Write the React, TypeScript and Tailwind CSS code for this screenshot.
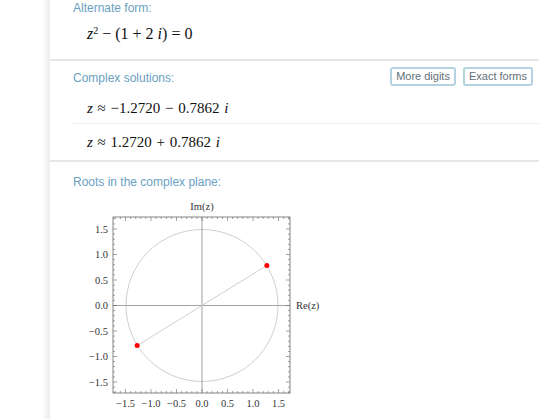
const serif = { fontFamily: '"Liberation Serif", "DejaVu Serif", serif' };

function Plot() {
  const cx = 202;
  const cy = 304.5;
  const u = 51;
  const ticks: number[] = [];
  for (let i = -17; i <= 17; i++) ticks.push(i / 10);
  const labels = [1.5, 1.0, 0.5, 0.0, -0.5, -1.0, -1.5];
  const fmt = (v: number) => (v < 0 ? "\u2212" : "") + Math.abs(v).toFixed(1);
  const left = 113;
  const right = 290;
  const top = 216;
  const bottom = 392;
  return (
    <svg width="240" height="224" viewBox="80 195 240 224" className="block">
      <g fontFamily='"Liberation Serif", "DejaVu Serif", serif' fontSize="10.5" fill="#333">
        <text x={cx} y={209} textAnchor="middle">Im(z)</text>
        <text x={296} y={308}>Re(z)</text>
        {labels.map((v) => (
          <text key={"y" + v} x={108} y={cy - v * u + 3.5} textAnchor="end">
            {fmt(v)}
          </text>
        ))}
        {labels.map((v) => (
          <text key={"x" + v} x={cx + v * u} y={406} textAnchor="middle">
            {fmt(v)}
          </text>
        ))}
      </g>
      <circle cx={cx} cy={cy} r={76} fill="none" stroke="#cfcfcf" strokeWidth="1" />
      <line x1={cx} y1={top} x2={cx} y2={bottom} stroke="#8a8a8a" strokeWidth="0.8" />
      <line x1={left} y1={cy} x2={right} y2={cy} stroke="#8a8a8a" strokeWidth="0.8" />
      <line x1={cx - 1.272 * u} y1={cy + 0.7862 * u} x2={cx + 1.272 * u} y2={cy - 0.7862 * u} stroke="#cfcfcf" strokeWidth="1" />
      <rect x={left} y={top} width={right - left} height={bottom - top} fill="none" stroke="#666" strokeWidth="0.8" />
      {ticks.map((v) => {
        const major = Math.abs(Math.round(v * 10) % 5) === 0;
        const len = major ? 4 : 2;
        const x = cx + v * u;
        const y = cy - v * u;
        return (
          <g key={v} stroke="#666" strokeWidth="0.6">
            <line x1={x} y1={top} x2={x} y2={top + len} />
            <line x1={x} y1={bottom} x2={x} y2={bottom - len} />
            <line x1={left} y1={y} x2={left + len} y2={y} />
            <line x1={right} y1={y} x2={right - len} y2={y} />
          </g>
        );
      })}
      <circle cx={cx + 1.272 * u} cy={cy - 0.7862 * u} r={2.5} fill="#ff0000" />
      <circle cx={cx - 1.272 * u} cy={cy + 0.7862 * u} r={2.5} fill="#ff0000" />
    </svg>
  );
}

function Title({ children }: { children: React.ReactNode }) {
  return <div className="text-[12px] leading-[14px] text-[#6aa0bf]">{children}</div>;
}

function Button({ children }: { children: React.ReactNode }) {
  return (
    <div className="flex h-[19px] items-center rounded-[3px] border-2 border-[#b4d3de] px-[4px] text-[11px] text-[#5f6f78]">
      {children}
    </div>
  );
}

export default function App() {
  return (
    <div
      className="flex h-[419px] w-[539px] overflow-hidden bg-white"
      style={{ fontFamily: '"Liberation Sans", Arial, sans-serif' }}
    >
      <div className="w-[50px] shrink-0 bg-gradient-to-r from-white from-[85%] to-[#ececec]" />
      <div className="flex-1 bg-white">
        <div className="h-[61px] border-b-2 border-[#e6e6e6] pl-[23px] pt-[1px]">
          <Title>Alternate form:</Title>
          <div className="mt-[10px] pl-[14px] text-[16px] leading-[18px] text-[#111]" style={serif}>
            <i>z</i>
            <sup className="text-[10px]">2</sup> − (1 + 2 <i>i</i>) = 0
          </div>
        </div>
        <div className="h-[101px] border-b-2 border-[#e6e6e6] pl-[23px]">
          <div className="flex items-start justify-between pr-[6px] pt-[6px]">
            <div className="pt-[4px]">
              <Title>Complex solutions:</Title>
            </div>
            <div className="flex gap-[7px]">
              <Button>More digits</Button>
              <Button>Exact forms</Button>
            </div>
          </div>
          <div className="mt-[7px] flex h-[31px] items-center border-b border-[#e2eef2] pl-[14px] text-[15px] text-[#111] [word-spacing:1px]" style={serif}>
            <span>
              <i>z</i> ≈ −1.2720 − 0.7862 <i>i</i>
            </span>
          </div>
          <div className="flex h-[36px] items-center pl-[14px] text-[15px] text-[#111] [word-spacing:1px]" style={serif}>
            <span>
              <i>z</i> ≈ 1.2720 + 0.7862 <i>i</i>
            </span>
          </div>
        </div>
        <div className="pl-[23px] pt-[13px]">
          <Title>Roots in the complex plane:</Title>
          <div className="ml-[7px] mt-[7px]">
            <Plot />
          </div>
        </div>
      </div>
    </div>
  );
}
